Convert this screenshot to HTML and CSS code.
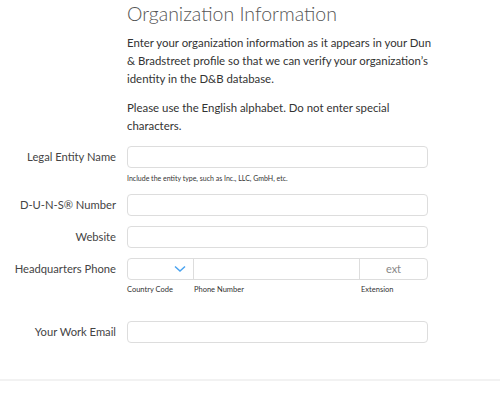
FILE: index.html
```html
<!DOCTYPE html>
<html lang="en">
<head>
  <meta charset="UTF-8">
  <title>Organization Information</title>
  <link rel="stylesheet" href="styles.css">
</head>
<body>
  <div class="org-page">
    <div class="intro">
      <h1>Organization Information</h1>
      <p>Enter your organization information as it appears in your Dun &amp; Bradstreet profile so that we can verify your organization’s identity in the D&amp;B database.</p>
      <p>Please use the English alphabet. Do not enter special characters.</p>
    </div>

    <div class="form-row">
      <label class="row-label">Legal Entity Name</label>
      <div class="field">
        <input class="text-input" type="text">
        <div class="hint">Include the entity type, such as Inc., LLC, GmbH, etc.</div>
      </div>
    </div>

    <div class="form-row">
      <label class="row-label">D-U-N-S® Number</label>
      <div class="field"><input class="text-input" type="text"></div>
    </div>

    <div class="form-row">
      <label class="row-label">Website</label>
      <div class="field"><input class="text-input" type="text"></div>
    </div>

    <div class="form-row">
      <label class="row-label">Headquarters Phone</label>
      <div class="field">
        <div class="phone-group">
          <div class="country-select">
            <svg width="12" height="8" viewBox="0 0 12 8"><path d="M1 1.5 L6 6 L11 1.5" fill="none" stroke="#4aa3f0" stroke-width="1.5"/></svg>
          </div>
          <div class="phone-number"></div>
          <div class="phone-ext">ext</div>
        </div>
        <div class="phone-hints">
          <span class="hint-country">Country Code</span>
          <span class="hint-number">Phone Number</span>
          <span class="hint-ext">Extension</span>
        </div>
      </div>
    </div>

    <div class="form-row email-row">
      <label class="row-label">Your Work Email</label>
      <div class="field"><input class="text-input" type="text"></div>
    </div>

    <div class="divider"></div>
  </div>
</body>
</html>
```

FILE: styles.css
```css
body {
  margin: 0;
  background: #fff;
  font-family: Lato, "Open Sans", Arial, sans-serif;
  color: #333;
}
.org-page {
  width: 500px;
  padding-top: 1px;
}
.intro {
  margin-left: 127px;
  width: 306px;
}
h1 {
  font-family: Lato, "Open Sans", Arial, sans-serif;
  font-weight: 300;
  font-size: 19.5px;
  color: #555;
  margin: 0 0 7px 0;
  line-height: 26px;
}
.intro p {
  font-size: 11.4px;
  line-height: 18px;
  margin: 0 0 11px 0;
  color: #333;
}
.form-row {
  display: grid;
  grid-template-columns: 116px 301px;
  column-gap: 11px;
  margin-top: 10px;
}
.row-label {
  text-align: right;
  font-size: 11.2px;
  line-height: 22px;
  color: #444;
}
.text-input {
  display: block;
  box-sizing: border-box;
  width: 301px;
  height: 22px;
  border: 1px solid #ddd;
  border-radius: 4px;
  margin: 0;
}
.hint {
  font-size: 7px;
  color: #333;
  margin-top: 6px;
  margin-bottom: 2px;
}
.phone-group {
  display: flex;
  box-sizing: border-box;
  height: 22px;
  border: 1px solid #ddd;
  border-radius: 4px;
}
.country-select {
  width: 66px;
  border-right: 1px solid #ddd;
  display: flex;
  align-items: center;
  justify-content: flex-end;
  padding-right: 7px;
  box-sizing: border-box;
}
.phone-number {
  flex: 1;
  border-right: 1px solid #ddd;
}
.phone-ext {
  width: 67px;
  text-align: center;
  font-size: 11px;
  line-height: 20px;
  color: #888;
}
.phone-hints {
  display: flex;
  font-size: 7.5px;
  margin-top: 5px;
  color: #333;
}
.hint-country { width: 67px; }
.hint-number { flex: 1; }
.hint-ext { width: 67px; }
.email-row {
  margin-top: 27px;
}
.divider {
  height: 2px;
  background: #f2f2f2;
  margin-top: 36px;
}
```
